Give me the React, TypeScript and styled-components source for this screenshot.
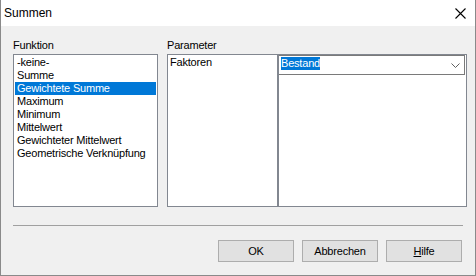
import React from "react";
import styled, { createGlobalStyle } from "styled-components";

const Global = createGlobalStyle`
  html, body { margin: 0; padding: 0; background: #f0f0f0; }
  body { font-family: "Liberation Sans", Arial, sans-serif; }
`;

const Window = styled.div`
  box-sizing: border-box;
  width: 476px;
  height: 276px;
  background: #f0f0f0;
  border: 1px solid #8a8a8a;
  border-top: none;
  display: flex;
  flex-direction: column;
  font-family: "Liberation Sans", Arial, sans-serif;
  font-size: 11px;
  letter-spacing: -0.2px;
  color: #000;
`;

const TitleBar = styled.div`
  height: 26px;
  flex: none;
  background: #fff;
  display: grid;
  grid-template-columns: 1fr 30px;
  align-items: center;
  padding-left: 3px;
  font-size: 12px;
  letter-spacing: 0;
`;

const CloseButton = styled.div`
  height: 26px;
  display: flex;
  align-items: center;
  justify-content: center;
`;

const Content = styled.div`
  display: flex;
  flex-direction: column;
  padding: 13px 8px 0 12px;
`;

const Columns = styled.div`
  display: grid;
  grid-template-columns: 145px 300px;
  column-gap: 9px;
`;

const Group = styled.div`
  display: flex;
  flex-direction: column;
`;

const Label = styled.div`
  height: 13px;
  line-height: 13px;
  margin-bottom: 2px;
`;

const ListBox = styled.div`
  box-sizing: border-box;
  height: 153px;
  background: #fff;
  border: 1px solid #828790;
  padding: 1px;
  display: flex;
  flex-direction: column;
`;

const Item = styled.div<{ $selected?: boolean }>`
  height: 13px;
  line-height: 13px;
  padding: 0 2px;
  white-space: nowrap;
  background: ${(p) => (p.$selected ? "#0078d7" : "transparent")};
  color: ${(p) => (p.$selected ? "#fff" : "#000")};
`;

const ParamPanel = styled.div`
  box-sizing: border-box;
  height: 153px;
  background: #fff;
  border: 1px solid #828790;
  display: grid;
  grid-template-columns: 110px 1fr;
`;

const NameCell = styled.div`
  border-right: 1px solid #828790;
  padding: 1px 2px;
  line-height: 13px;
`;

const ValueCell = styled.div`
  border-left: 1px solid #828790;
  padding-right: 1px;
`;

const Combo = styled.div`
  box-sizing: border-box;
  height: 20px;
  border: 1px solid #7a7a7a;
  border-left: none;
  display: flex;
  align-items: flex-start;
  justify-content: space-between;
  padding: 1px 4px 0 2px;
`;

const ComboValue = styled.span`
  height: 13px;
  line-height: 13px;
  background: #0078d7;
  color: #fff;
`;

const Chevron = styled.svg`
  margin-top: 6px;
`;

const Separator = styled.div`
  height: 0;
  border-top: 1px solid #a0a0a0;
  margin: 18px 4px 0 0;
`;

const ButtonRow = styled.div`
  display: flex;
  justify-content: flex-end;
  gap: 8px;
  margin-top: 14px;
  padding-right: 5px;
`;

const Button = styled.div`
  box-sizing: border-box;
  width: 76px;
  height: 22px;
  background: #e1e1e1;
  border: 1px solid #adadad;
  display: flex;
  align-items: center;
  justify-content: center;
`;

const Mnemonic = styled.span`
  text-decoration: underline;
`;

const items = [
  "-keine-",
  "Summe",
  "Gewichtete Summe",
  "Maximum",
  "Minimum",
  "Mittelwert",
  "Gewichteter Mittelwert",
  "Geometrische Verknüpfung",
];

export default function App() {
  return (
    <>
      <Global />
      <Window>
        <TitleBar>
          <span>Summen</span>
          <CloseButton>
            <svg width="11" height="11" viewBox="0 0 11 11">
              <path d="M0.5 0.5 L10.5 10.5 M10.5 0.5 L0.5 10.5" stroke="#000" strokeWidth="1.1" fill="none" />
            </svg>
          </CloseButton>
        </TitleBar>
        <Content>
          <Columns>
            <Group>
              <Label>Funktion</Label>
              <ListBox>
                {items.map((it) => (
                  <Item key={it} $selected={it === "Gewichtete Summe"}>
                    {it}
                  </Item>
                ))}
              </ListBox>
            </Group>
            <Group>
              <Label>Parameter</Label>
              <ParamPanel>
                <NameCell>Faktoren</NameCell>
                <ValueCell>
                  <Combo>
                    <ComboValue>Bestand</ComboValue>
                    <Chevron width="9" height="5" viewBox="0 0 9 5">
                      <path d="M0.5 0.5 L4.5 4.5 L8.5 0.5" stroke="#606060" strokeWidth="1" fill="none" />
                    </Chevron>
                  </Combo>
                </ValueCell>
              </ParamPanel>
            </Group>
          </Columns>
          <Separator />
          <ButtonRow>
            <Button>OK</Button>
            <Button>Abbrechen</Button>
            <Button>
              <span>
                <Mnemonic>H</Mnemonic>ilfe
              </span>
            </Button>
          </ButtonRow>
        </Content>
      </Window>
    </>
  );
}
